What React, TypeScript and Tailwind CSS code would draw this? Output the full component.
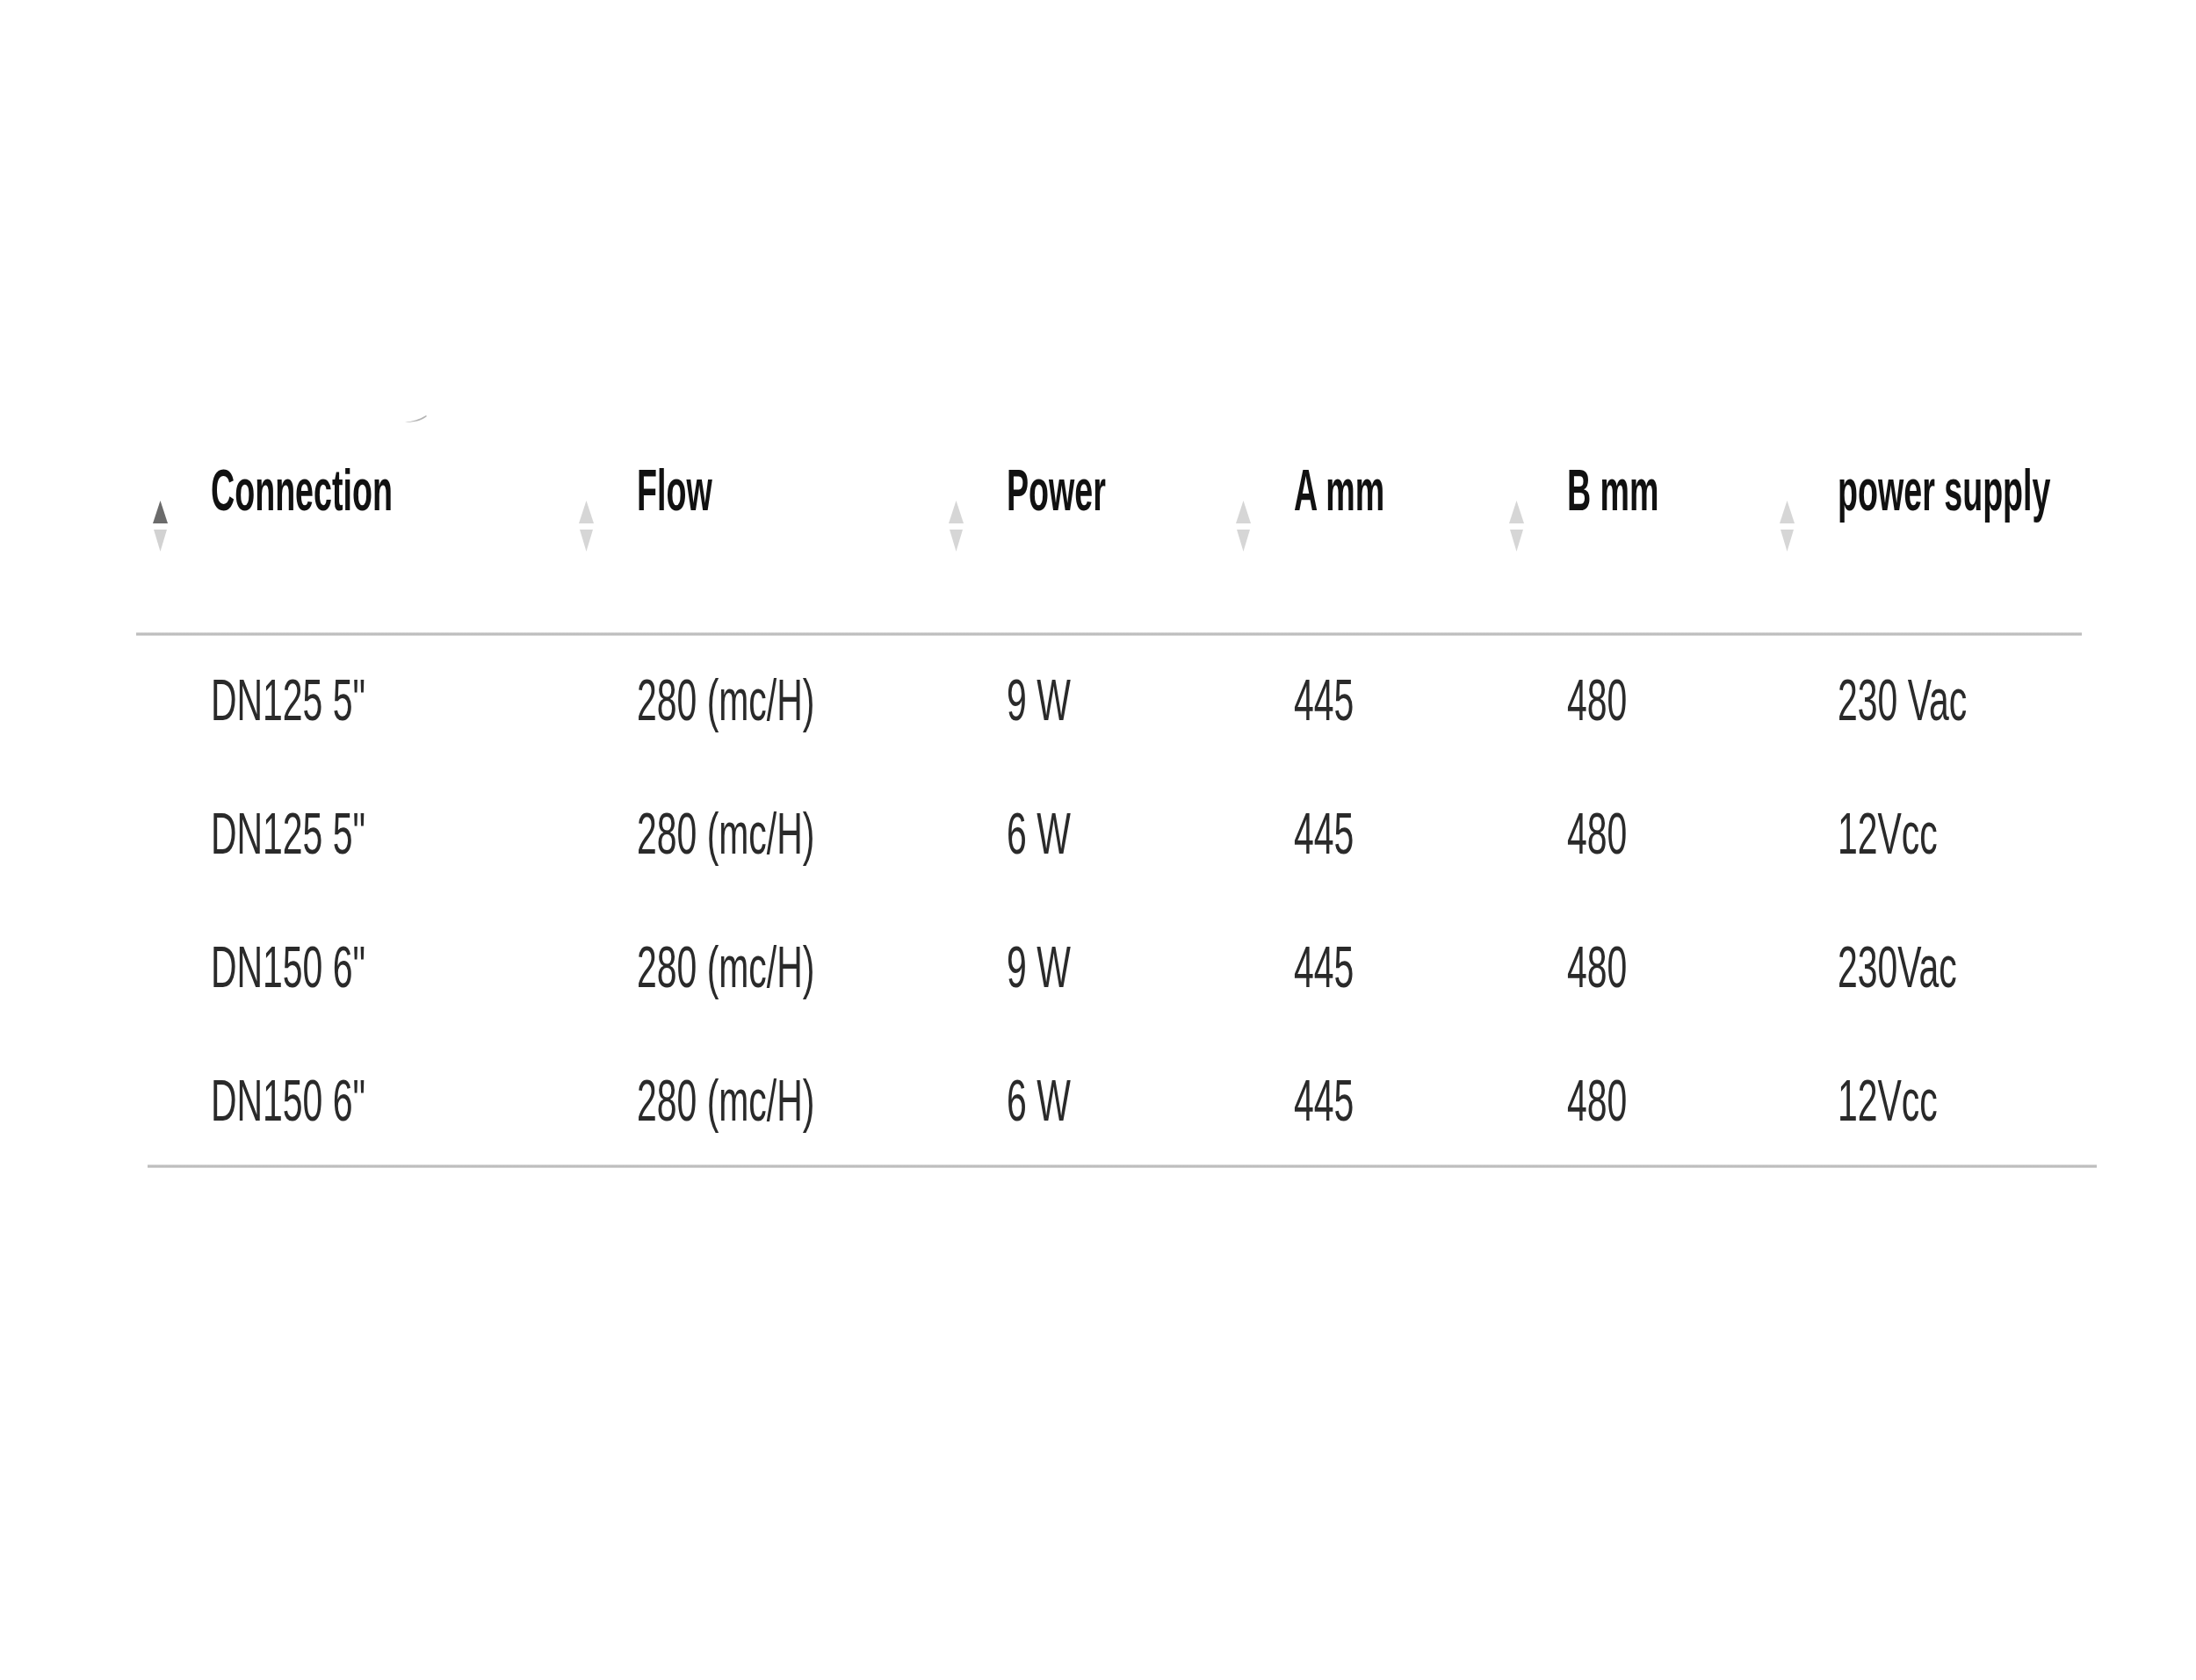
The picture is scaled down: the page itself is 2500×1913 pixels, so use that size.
import React from "react";

const headers = ["Connection", "Flow", "Power", "A mm", "B mm", "power supply"];

const rows: string[][] = [
  ['DN125 5"', "280 (mc/H)", "9 W", "445", "480", "230 Vac"],
  ['DN125 5"', "280 (mc/H)", "6 W", "445", "480", "12Vcc"],
  ['DN150 6"', "280 (mc/H)", "9 W", "445", "480", "230Vac"],
  ['DN150 6"', "280 (mc/H)", "6 W", "445", "480", "12Vcc"],
];

function SortIcon({ active }: { active: boolean }) {
  return (
    <svg width="17" height="58" viewBox="0 0 17 58" className="block shrink-0">
      <polygon points="8.5,0 17,26 0,26" fill={active ? "#6b6b6b" : "#d6d6d6"} />
      <polygon points="1,33 16,33 8.5,58" fill={active ? "#d2d2d2" : "#d6d6d6"} />
    </svg>
  );
}

const gridCols =
  "grid grid-cols-[485px_421px_327px_311px_308px_1fr] pl-[174px]";

export default function App() {
  return (
    <div
      className="relative w-[2500px] h-[1913px] bg-white overflow-hidden"
      style={{ fontFamily: '"Liberation Sans", Arial, Helvetica, sans-serif' }}
    >
      <svg
        width="26"
        height="10"
        viewBox="0 0 26 10"
        className="absolute left-[461px] top-[472px]"
      >
        <path d="M0 9 C8 8 16 6 24 1 L25 2 C19 7 10 9 0 9 Z" fill="#b4b4b4" />
      </svg>

      <div className="pt-[525px]">
        {/* header */}
        <div className={`${gridCols} h-[195px]`}>
          {headers.map((h, i) => (
            <div key={h} className="flex items-start">
              <div className="mt-[45px] w-[17px]">
                <SortIcon active={i === 0} />
              </div>
              <div className="ml-[49px] text-[66px] leading-none font-bold text-[#111111] whitespace-nowrap origin-left scale-x-[0.57]">
                {h}
              </div>
            </div>
          ))}
        </div>

        <div className="ml-[155px] w-[2215px] h-[4px] bg-linear-to-b from-[#e2e2e2] via-[#b3b3b3] to-[#dedede]" />

        {/* body */}
        <div className="-mt-[3px]">
          {rows.map((r, ri) => (
            <div key={ri} className={`${gridCols} h-[152px] items-center`}>
              {r.map((c, ci) => (
                <div key={ci} className="pl-[66px]">
                  <div className="text-[66px] leading-none text-[#2a2a2a] whitespace-nowrap origin-left scale-x-[0.62]">
                    {c}
                  </div>
                </div>
              ))}
            </div>
          ))}
        </div>

        <div className="-mt-[3px] ml-[168px] w-[2219px] h-[4px] bg-linear-to-b from-[#e2e2e2] via-[#b3b3b3] to-[#dedede]" />
      </div>
    </div>
  );
}
